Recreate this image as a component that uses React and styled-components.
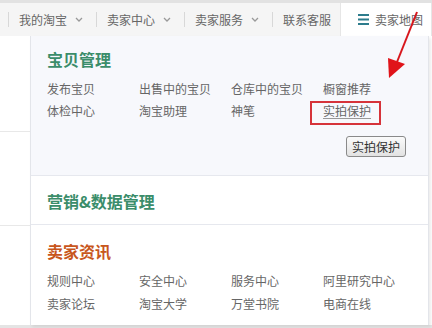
import styled, { createGlobalStyle } from 'styled-components';

const GlobalStyle = createGlobalStyle`
  html, body {
    margin: 0;
    padding: 0;
    background: #fff;
    font-family: "Noto Sans CJK SC", "Liberation Sans", sans-serif;
  }
`;

const Page = styled.div`
  position: relative;
  width: 432px;
  height: 328px;
  overflow: hidden;
  background: #fff;
`;

const TopBar = styled.div`
  display: flex;
  align-items: stretch;
  height: 33px;
  border-top: 3px solid #e2e2e2;
  background: #f5f5f5;
  padding-left: 8px;
`;

const NavItem = styled.div`
  display: flex;
  align-items: center;
  font-size: 12px;
  color: #666;
  white-space: nowrap;
`;

const Divider = styled.span`
  width: 1px;
  height: 15px;
  background: #d8d8d8;
  margin-right: 10px;
`;

const Chevron = styled.svg`
  margin-left: 8px;
  margin-right: 13px;
`;

const MapTab = styled.div`
  display: flex;
  align-items: center;
  margin-left: 9px;
  width: 93px;
  box-sizing: border-box;
  padding-left: 17px;
  background: #fff;
  border-left: 1px solid #e6e6e6;
  border-right: 1px solid #e6e6e6;
  font-size: 12px;
  color: #666;
  gap: 6px;
`;

const Body = styled.div`
  display: flex;
  height: 289px;
  border-bottom: 3px solid #e4e4e4;
`;

const LeftRail = styled.div`
  width: 30px;
  display: flex;
  flex-direction: column;
`;

const RailBlock = styled.div`
  height: ${(p) => p.h}px;
  border-bottom: 1px solid #e8e8e8;
`;

const Panel = styled.div`
  width: 397px;
  border-left: 1px solid #e3e5ea;
  border-right: 1px solid #e3e5ea;
  box-shadow: 2px 2px 3px rgba(0, 0, 0, 0.08);
  display: flex;
  flex-direction: column;
`;

const Section = styled.div`
  background: ${(p) => (p.tinted ? '#f7f8fc' : '#fff')};
  border-bottom: ${(p) => (p.last ? 'none' : '1px solid #e6e8ee')};
  padding: ${(p) => p.pad};
  padding-left: 16px;
  display: flex;
  flex-direction: column;
`;

const Title = styled.div`
  font-size: 16px;
  line-height: 20px;
  font-weight: bold;
  color: ${(p) => p.color};
`;

const Grid = styled.div`
  display: grid;
  grid-template-columns: repeat(4, 92px);
  margin-top: ${(p) => p.mt}px;
`;

const Link = styled.span`
  position: relative;
  display: block;
  font-size: 12px;
  line-height: ${(p) => p.lh}px;
  color: #666;
  white-space: nowrap;
  text-decoration: ${(p) => (p.marked ? 'underline' : 'none')};
  text-decoration-color: #999;
  text-underline-offset: 2px;
  ${(p) =>
    p.marked &&
    `
    &::after {
      content: '';
      position: absolute;
      left: -13px;
      top: 1px;
      width: 67px;
      height: 20px;
      border: 2px solid #d6333a;
    }
  `}
`;

const ButtonRow = styled.div`
  display: flex;
  justify-content: flex-end;
  padding-right: 22px;
  margin-top: 14px;
`;

const Button = styled.button`
  height: 21px;
  padding: 0 5px;
  font-family: inherit;
  font-size: 12px;
  line-height: 19px;
  color: #333;
  border: 1px solid #8a8a8a;
  border-radius: 3px;
  background: linear-gradient(#fbfbfb, #e2e2e2);
`;

const Arrow = styled.svg`
  position: absolute;
  left: 0;
  top: 0;
  pointer-events: none;
`;

const ChevronIcon = () => (
  <Chevron width="8" height="5" viewBox="0 0 8 5">
    <path d="M1 1 L4 4 L7 1" fill="none" stroke="#999" strokeWidth="1.3" />
  </Chevron>
);

const navItems = ['我的淘宝', '卖家中心', '卖家服务'];

const goods = [
  ['发布宝贝', '出售中的宝贝', '仓库中的宝贝', '橱窗推荐'],
  ['体检中心', '淘宝助理', '神笔', '实拍保护'],
];

const news = [
  ['规则中心', '安全中心', '服务中心', '阿里研究中心'],
  ['卖家论坛', '淘宝大学', '万堂书院', '电商在线'],
];

function App() {
  return (
    <Page>
      <GlobalStyle />
      <TopBar>
        {navItems.map((t) => (
          <NavItem key={t}>
            <Divider />
            {t}
            <ChevronIcon />
          </NavItem>
        ))}
        <NavItem>
          <Divider />
          联系客服
        </NavItem>
        <MapTab>
          <svg width="11" height="11" viewBox="0 0 11 11">
            <rect x="0" y="0" width="11" height="2" fill="#2d7c8c" />
            <rect x="0" y="4.5" width="11" height="2" fill="#2d7c8c" />
            <rect x="0" y="9" width="11" height="2" fill="#2d7c8c" />
          </svg>
          卖家地图
        </MapTab>
      </TopBar>
      <Body>
        <LeftRail>
          <RailBlock h={95} />
          <RailBlock h={93} />
        </LeftRail>
        <Panel>
          <Section tinted pad="13px 0 18px">
            <Title color="#3b8d6a">宝贝管理</Title>
            <Grid mt={9}>
              {goods.flat().map((t) => (
                <Link key={t} lh={22} marked={t === '实拍保护'}>
                  {t}
                </Link>
              ))}
            </Grid>
            <ButtonRow>
              <Button>实拍保护</Button>
            </ButtonRow>
          </Section>
          <Section pad="15px 0 13px">
            <Title color="#3b8d6a">营销&数据管理</Title>
          </Section>
          <Section last pad="16px 0 0">
            <Title color="#c8561c">卖家资讯</Title>
            <Grid mt={8}>
              {news.flat().map((t) => (
                <Link key={t} lh={23}>
                  {t}
                </Link>
              ))}
            </Grid>
          </Section>
        </Panel>
      </Body>
      <Arrow width="432" height="328" viewBox="0 0 432 328">
        <line x1="417" y1="12" x2="397" y2="62" stroke="#d8161c" strokeWidth="2" />
        <polygon points="389,78 388,58 405,64" fill="#e0141a" />
      </Arrow>
    </Page>
  );
}

export default App;
